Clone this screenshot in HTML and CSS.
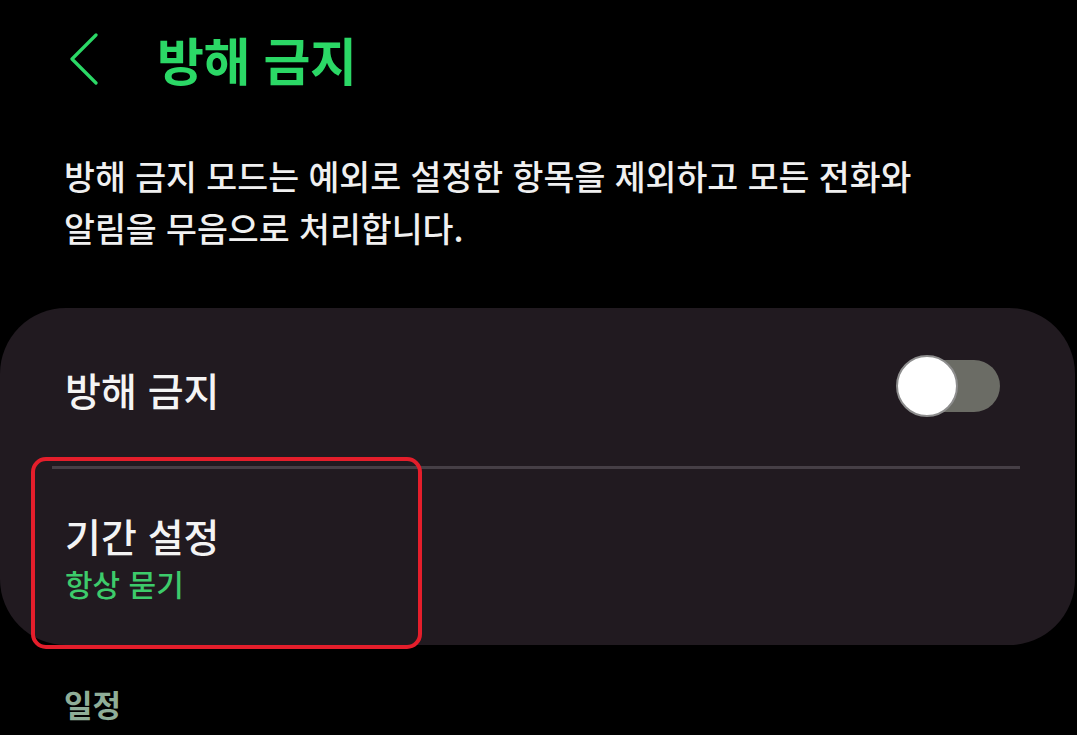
FILE: index.html
```html
<!DOCTYPE html>
<html lang="ko">
<head>
<meta charset="utf-8">
<link rel="stylesheet" href="styles.css">
</head>
<body>
<div class="screen">
  <header class="appbar">
    <svg class="back" width="30" height="52" viewBox="0 0 30 52"><path d="M27 2 L3 26 L27 50" fill="none" stroke="#2bd866" stroke-width="3.2" stroke-linecap="round" stroke-linejoin="round"/></svg>
    <h1 class="title">방해 금지</h1>
  </header>
  <p class="desc">방해 금지 모드는 예외로 설정한 항목을 제외하고 모든 전화와<br>알림을 무음으로 처리합니다.</p>
  <section class="card">
    <div class="row row-toggle">
      <span class="row-title">방해 금지</span>
      <span class="switch"><span class="thumb"></span></span>
    </div>
    <div class="divider"></div>
    <div class="row row-sub">
      <span class="row-title">기간 설정</span>
      <span class="row-value">항상 묻기</span>
      <span class="highlight"></span>
    </div>
  </section>
  <h2 class="section-label">일정</h2>
</div>
</body>
</html>
```
FILE: styles.css
```css
html, body {
  margin: 0;
  padding: 0;
  background: #000;
}
body {
  width: 1077px;
  height: 735px;
  overflow: hidden;
  font-family: "Noto Sans CJK KR", "Noto Sans", sans-serif;
  color: #f2f2f2;
}
.screen {
  display: flex;
  flex-direction: column;
}
.appbar {
  display: flex;
  align-items: center;
  height: 120px;
  padding-left: 69px;
  box-sizing: border-box;
  padding-bottom: 2px;
}
.back {
  display: block;
  margin-right: 58px;
}
.title {
  margin: 0;
  font-size: 51px;
  font-weight: 700;
  color: #2bd866;
  letter-spacing: -0.5px;
  line-height: 1;
}
.desc {
  margin: 30px 0 0 64px;
  font-size: 33.6px;
  line-height: 52px;
  font-weight: 500;
  color: #f0f0f0;
  letter-spacing: 0;
}
.card {
  margin-top: 54px;
  width: 1075px;
  height: 337px;
  background: #211a20;
  border-radius: 66px;
  box-sizing: border-box;
  padding: 0 55px 0 52px;
  display: flex;
  flex-direction: column;
}
.row {
  display: flex;
  padding-left: 13px;
}
.row-toggle {
  height: 158px;
  align-items: center;
  justify-content: space-between;
  box-sizing: border-box;
}
.row-title {
  font-size: 39px;
  font-weight: 500;
  color: #f4f4f4;
  line-height: 1;
}
.row-toggle .row-title {
  margin-top: 4px;
}
.switch {
  position: relative;
  width: 90px;
  height: 52px;
  margin-right: 20px;
  margin-bottom: 2px;
  border-radius: 26px;
  background: #6b6c65;
}
.thumb {
  position: absolute;
  left: -14px;
  top: -5px;
  width: 58px;
  height: 58px;
  border-radius: 50%;
  background: #fff;
  border: 2px solid #8d8d8d;
}
.divider {
  height: 3px;
  background: #463f46;
}
.row-sub {
  position: relative;
  flex-direction: column;
  padding-top: 43px;
}
.row-sub .row-title {
  line-height: 46px;
}
.row-value {
  margin-top: 6px;
  font-size: 30px;
  font-weight: 500;
  color: #3dcb6b;
  line-height: 38px;
}
.highlight {
  position: absolute;
  left: -21px;
  top: -12px;
  width: 383px;
  height: 184px;
  border: 4px solid #e41e2b;
  border-radius: 15px;
}
.section-label {
  margin: 43px 0 0 64px;
  font-size: 31px;
  font-weight: 700;
  color: #8fae98;
  line-height: 1;
}
```
